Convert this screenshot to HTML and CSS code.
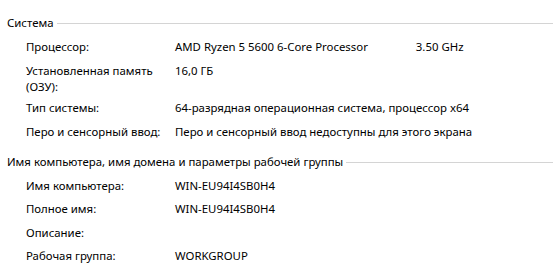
FILE: index.html
```html
<!DOCTYPE html>
<html lang="ru">
<head>
<meta charset="utf-8">
<link rel="stylesheet" href="styles.css">
</head>
<body>
<section class="group group-system">
  <div class="group-head"><span class="group-title">Система</span><span class="rule"></span></div>
  <div class="rows">
    <div class="row"><div class="label">Процессор:</div><div class="value">AMD Ryzen 5 5600 6-Core Processor<span class="freq">3.50 GHz</span></div></div>
    <div class="row row-tall"><div class="label">Установленная память<br>(ОЗУ):</div><div class="value">16,0 ГБ</div></div>
    <div class="row"><div class="label">Тип системы:</div><div class="value">64-разрядная операционная система, процессор x64</div></div>
    <div class="row"><div class="label">Перо и сенсорный ввод:</div><div class="value">Перо и сенсорный ввод недоступны для этого экрана</div></div>
  </div>
</section>
<section class="group group-name">
  <div class="group-head"><span class="group-title">Имя компьютера, имя домена и параметры рабочей группы</span><span class="rule"></span></div>
  <div class="rows">
    <div class="row"><div class="label">Имя компьютера:</div><div class="value">WIN-EU94I4SB0H4</div></div>
    <div class="row"><div class="label">Полное имя:</div><div class="value">WIN-EU94I4SB0H4</div></div>
    <div class="row"><div class="label">Описание:</div><div class="value"></div></div>
    <div class="row"><div class="label">Рабочая группа:</div><div class="value">WORKGROUP</div></div>
  </div>
</section>
</body>
</html>
```

FILE: styles.css
```css
html, body {
  margin: 0;
  padding: 0;
  background: #ffffff;
}
body {
  font-family: "Noto Sans", "Open Sans", sans-serif;
  font-size: 11.4px;
  line-height: 16px;
  color: #000000;
  width: 553px;
  height: 279px;
  overflow: hidden;
}
.group {
  display: flex;
  flex-direction: column;
}
.group-system {
  padding-top: 15px;
}
.group-name {
  padding-top: 14px;
}
.group-head {
  display: flex;
  align-items: center;
  padding-left: 7px;
  height: 16px;
}
.group-title {
  white-space: nowrap;
  padding-right: 3px;
}
.rule {
  flex: 1;
  height: 1px;
  background: #d4d4d4;
  margin-top: 1px;
}
.rows {
  display: flex;
  flex-direction: column;
  padding-left: 26px;
  padding-top: 8px;
  gap: 7.5px;
}
.row {
  display: grid;
  grid-template-columns: 149px 1fr;
}
.row-tall {
  margin-bottom: -2px;
}
.label, .value {
  white-space: nowrap;
}
.freq {
  margin-left: 48px;
}
```
